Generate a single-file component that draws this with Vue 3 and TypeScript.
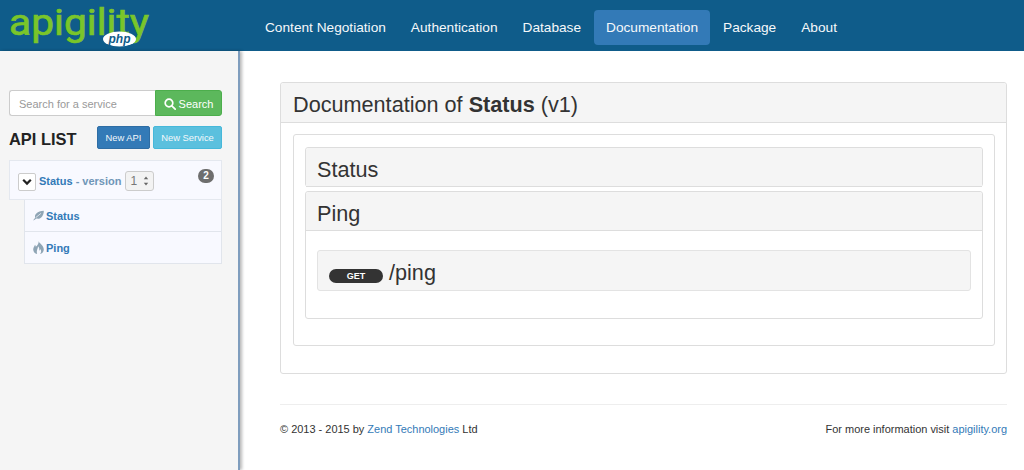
<script setup lang="ts">
const navItems: { label: string; active?: boolean }[] = [
  { label: 'Content Negotiation' },
  { label: 'Authentication' },
  { label: 'Database' },
  { label: 'Documentation', active: true },
  { label: 'Package' },
  { label: 'About' },
]
</script>

<template>
  <div class="page">
    <header class="navbar">
      <svg class="logo" width="150" height="50" viewBox="0 0 150 50" role="img" aria-label="apigility php">
        <text x="9" y="35" textLength="140" lengthAdjust="spacingAndGlyphs" class="logo-text">apigility</text>
        <ellipse cx="119.5" cy="39" rx="16.5" ry="7.5" fill="#fff" />
        <text x="119.5" y="42.5" text-anchor="middle" class="logo-php">php</text>
      </svg>
      <nav class="nav">
        <a v-for="item in navItems" :key="item.label" class="nav-link" :class="{ active: item.active }">{{ item.label }}</a>
      </nav>
    </header>

    <div class="content">
      <aside class="sidebar">
        <div class="search">
          <div class="search-input">Search for a service</div>
          <button class="search-btn">
            <svg width="12" height="12" viewBox="0 0 12 12" fill="none" stroke="#fff" stroke-width="1.7">
              <circle cx="5" cy="5" r="3.8" />
              <path d="M7.8 7.8 11.2 11.2" stroke-linecap="round" />
            </svg>
            Search
          </button>
        </div>
        <div class="api-head">
          <h4>API LIST</h4>
          <div class="api-actions">
            <button class="btn btn-blue">New API</button>
            <button class="btn btn-cyan">New Service</button>
          </div>
        </div>
        <div class="api-group">
          <div class="api-item">
            <span class="toggle">
              <svg width="10" height="8" viewBox="0 0 10 8" fill="none" stroke="#222" stroke-width="2.2">
                <path d="M1.2 1.8 5 5.6 8.8 1.8" />
              </svg>
            </span>
            <a class="api-name">Status</a>
            <span class="api-version">- version</span>
            <span class="version-box">
              <span>1</span>
              <svg width="6" height="12" viewBox="0 0 6 12" fill="#666">
                <path d="M3 1.5 5.2 4.2H.8z" />
                <path d="M3 10.5 5.2 7.8H.8z" />
              </svg>
            </span>
            <span class="count">2</span>
          </div>
          <div class="sub-item">
            <svg width="11" height="11" viewBox="0 0 12 11" fill="#8fa5b5">
              <path d="M.2 10.8 2.4 8C1.2 4.2 4.6.6 11.8.2 11.8 6 8.4 9.8 3.8 8.8L1 10.8z" />
              <path d="M3 7.8 8.6 3.2" stroke="#f8f9ff" stroke-width=".8" fill="none" />
            </svg>
            <a>Status</a>
          </div>
          <div class="sub-item">
            <svg width="11" height="13" viewBox="0 0 11 13" fill="#8fa5b5" fill-rule="evenodd">
              <path d="M5.6 0C6 2.4 10.8 4.2 10.8 8.4 10.8 10.6 9.2 12.4 7 13 8.4 11.6 8.6 9.6 7.2 8 7.2 8.9 6.8 9.4 6.2 9.6 6.6 8 6.2 6.2 5 5.2 5.2 7.4 3 9.2 4.2 13 1.8 12.6.2 10.6.2 8.4.2 6.6 1.4 5.6 2 3.8 2.6 4.4 2.8 5 2.8 5.8 4.4 4.4 6 2.6 5.6 0Z" />
            </svg>
            <a>Ping</a>
          </div>
        </div>
      </aside>

      <main class="main">
        <section class="panel outer">
          <h3 class="panel-heading title">Documentation of <strong>Status</strong> (v1)</h3>
          <div class="outer-body">
            <div class="panel inner">
              <div class="panel status">
                <h4 class="panel-heading sub">Status</h4>
              </div>
              <div class="panel ping">
                <h4 class="panel-heading sub">Ping</h4>
                <div class="ping-body">
                  <div class="well">
                    <span class="method">GET</span>
                    <span class="route">/ping</span>
                  </div>
                </div>
              </div>
            </div>
          </div>
        </section>
        <footer class="footer">
          <span>© 2013 - 2015 by <a>Zend Technologies</a> Ltd</span>
          <span>For more information visit <a>apigility.org</a></span>
        </footer>
      </main>
    </div>
  </div>
</template>

<style>
html, body {
  margin: 0;
  overflow: hidden;
}
</style>

<style scoped>
.page {
  width: 1024px;
  height: 470px;
  overflow: hidden;
  display: flex;
  flex-direction: column;
  background: #fff;
  color: #333;
  font-family: "Liberation Sans", Arial, sans-serif;
  font-size: 14px;
}
a { color: #337ab7; }
.navbar {
  height: 51px;
  flex: none;
  display: flex;
  background: #0f5c8a;
}
.logo { flex: none; margin-right: 103px; }
.logo-text {
  font-family: "Roboto", sans-serif;
  font-size: 37px;
  fill: #7ac52a;
  stroke: #7ac52a;
  stroke-width: 0.7px;
}
.logo-php {
  font-family: "Liberation Sans", sans-serif;
  font-size: 12px;
  font-weight: 700;
  font-style: italic;
  fill: #0f5c8a;
}
.nav { display: flex; gap: 1px; padding-top: 10px; align-items: flex-start; }
.nav-link {
  height: 35px;
  line-height: 36px;
  padding: 0 12px;
  color: #f6f8fa;
  font-size: 13.68px;
  border-radius: 4px;
}
.nav-link.active { background: #337ab7; }

.content { flex: 1; display: flex; min-height: 0; }
.sidebar {
  box-sizing: border-box;
  flex: none;
  padding: 39px 16px 0 9px;
  background: #f5f5f5;
  border-right: 2px solid #7f9dbd;
  box-shadow: 2px 0 3px rgba(0,0,0,.28);
  width: 240px;
}
.search { display: flex; height: 26px; width: 213px; }
.search-input {
  flex: none;
  width: 146px;
  box-sizing: border-box;
  background: #fff;
  border: 1px solid #ccc;
  border-right: 0;
  border-radius: 3px 0 0 3px;
  color: #999;
  font-size: 11px;
  line-height: 26px;
  padding-left: 9px;
}
.search-btn {
  flex: 1;
  border: 1px solid #4cae4c;
  background: #5cb85c;
  color: #fff;
  border-radius: 0 3px 3px 0;
  font: 11px "Liberation Sans", Arial, sans-serif;
  padding: 1px 0 0;
  display: flex;
  align-items: center;
  justify-content: center;
  gap: 3px;
}
.api-head {
  width: 213px;
  display: flex;
  justify-content: space-between;
  margin-top: 10px;
  height: 23px;
}
.api-head h4 {
  margin: 0;
  font-size: 16.4px;
  line-height: 26px;
  color: #222;
}
.api-actions { display: flex; gap: 3px; }
.btn {
  height: 23px;
  border-radius: 2px;
  border: 1px solid;
  color: #f4f8fb;
  font: 9.4px "Liberation Sans", Arial, sans-serif;
  padding: 0;
}
.btn-blue { width: 53px; background: #337ab7; border-color: #2e6da4; }
.btn-cyan { width: 69px; background: #5bc0de; border-color: #46b8da; }
.api-group { width: 213px; margin-top: 11px; }
.api-item {
  height: 40px;
  box-sizing: border-box;
  background: #f8f9ff;
  border: 1px solid #e4e8ef;
  display: flex;
  align-items: flex-start;
  padding: 10px 0 0 8px;
  position: relative;
  font-size: 11px;
  font-weight: 700;
}
.toggle {
  width: 18px;
  height: 18px;
  margin-top: 2px;
  box-sizing: border-box;
  background: #fff;
  border: 1px solid #ccc;
  border-radius: 2px;
  display: flex;
  align-items: center;
  justify-content: center;
}
.api-name { margin-left: 3px; line-height: 20px; }
.api-version { margin-left: 3px; line-height: 20px; color: #6f96b8; }
.version-box {
  margin-left: 4px;
  width: 29px;
  height: 20px;
  box-sizing: border-box;
  border: 1px solid #ccc;
  border-radius: 3px;
  background: #f3f3f3;
  color: #777;
  font-weight: 400;
  font-size: 12px;
  display: flex;
  align-items: center;
  justify-content: space-between;
  padding: 0 4px 0 4px;
}
.count {
  position: absolute;
  right: 7px;
  top: 8px;
  width: 16px;
  height: 14px;
  border-radius: 8px;
  background: #6e6e6e;
  color: #fff;
  font-size: 10px;
  line-height: 14px;
  text-align: center;
}
.sub-item {
  margin-left: 15px;
  height: 32px;
  box-sizing: border-box;
  background: #f8f9ff;
  border: 1px solid #e1e5ec;
  border-top: 0;
  display: flex;
  align-items: center;
  gap: 2px;
  padding-left: 8px;
  font-size: 11px;
  font-weight: 700;
}

.main { flex: 1; min-width: 0; padding: 31px 17px 0 40px; }
.panel {
  background: #fff;
  border: 1px solid #ddd;
  border-radius: 3px;
  box-sizing: border-box;
}
.panel-heading {
  margin: 0;
  background: #f5f5f5;
  border-bottom: 1px solid #ddd;
  font-weight: 400;
  color: #333;
}
.title {
  height: 40px;
  box-sizing: border-box;
  padding-left: 12px;
  font-size: 21.65px;
  line-height: 44px;
  border-radius: 3px 3px 0 0;
}
.outer { height: 292px; }
.outer-body { padding: 11px 11px 0 12px; }
.inner { height: 212px; padding: 12px 11px 0; }
.status { height: 40px; }
.sub {
  height: 39px;
  box-sizing: border-box;
  padding-left: 11px;
  font-size: 21.65px;
  line-height: 43px;
  border-radius: 3px 3px 0 0;
}
.ping { margin-top: 4px; height: 128px; }
.ping-body { padding: 19px 11px 0; }
.well {
  height: 41px;
  box-sizing: border-box;
  background: #f5f5f5;
  border: 1px solid #e3e3e3;
  border-radius: 3px;
  padding-left: 11px;
  display: flex;
  align-items: center;
}
.method {
  width: 54px;
  height: 14px;
  margin-top: 11px;
  border-radius: 7px;
  background: #333;
  color: #fff;
  font-size: 9px;
  font-weight: 700;
  line-height: 15px;
  text-align: center;
}
.route { margin-left: 6px; font-size: 21.65px; line-height: 24px; margin-top: 5px; }
.footer {
  margin-top: 30px;
  border-top: 1px solid #eee;
  padding-top: 17px;
  display: flex;
  justify-content: space-between;
  font-size: 10.98px;
  line-height: 14px;
}
</style>
